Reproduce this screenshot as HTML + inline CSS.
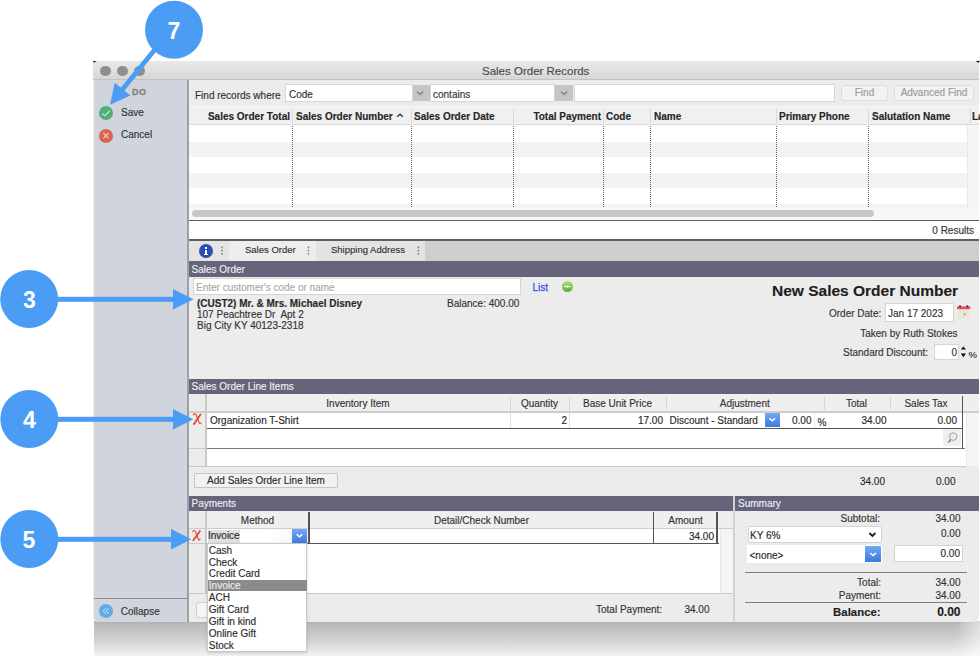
<!DOCTYPE html>
<html><head><meta charset="utf-8">
<style>
*{box-sizing:border-box;margin:0;padding:0}
html,body{width:980px;height:656px;overflow:hidden;background:#fff;font-family:"Liberation Sans",sans-serif;font-size:10px;color:#2b2b2b}
.a{position:absolute}
.t{position:absolute;white-space:pre;line-height:12px;-webkit-text-stroke:0.15px currentColor}
.r{text-align:right}
.c{text-align:center}
.hdr{position:absolute;background:#65647a;color:#eeeef2;font-size:10px;line-height:15px;padding-left:3px;-webkit-text-stroke:0.15px currentColor}
.inp{position:absolute;background:#fff;border:1px solid #cfcfcf}
.b{font-weight:bold}
.dot{position:absolute;width:1px;border-left:1px dotted #666}
</style></head><body>
<!-- shadow -->
<div class="a" style="left:94px;top:621px;width:886px;height:35px;background:linear-gradient(#adadad 0%,#bdbdbd 12%,#c6c6c6 35%,#dadada 65%,#f2f2f2 100%)"></div>
<div class="a" style="left:955px;top:621px;width:25px;height:35px;background:linear-gradient(90deg,rgba(255,255,255,0),rgba(255,255,255,.55))"></div>
<!-- window bg -->
<div class="a" style="left:93px;top:61px;width:886px;height:561px;background:#ececec;border-radius:1px 1px 5px 5px"></div>
<!-- title bar -->
<div class="a" style="left:93px;top:61px;width:886px;height:19px;background:linear-gradient(#e9e9e9,#d7d7d7);border-bottom:1px solid #c2c2c2;border-radius:1px 1px 0 0"></div>
<div class="a" style="left:100px;top:65.5px;width:10.5px;height:10.5px;border-radius:50%;background:#8f8e93"></div>
<div class="a" style="left:117px;top:65.5px;width:10.5px;height:10.5px;border-radius:50%;background:#8f8e93"></div>
<div class="a" style="left:134px;top:65.5px;width:10.5px;height:10.5px;border-radius:50%;background:#8f8e93"></div>
<div class="t" style="left:482px;top:64px;font-size:11.5px;line-height:14px;color:#4a4a4a">Sales Order Records</div>

<!-- sidebar -->
<div class="a" style="left:93.5px;top:80px;width:95px;height:541.5px;background:#d0d4dc;border-right:2px solid #9ea0a6;border-radius:0 0 0 5px"></div>
<div class="t b" style="left:131.9px;top:85.6px;font-size:9px;letter-spacing:0.7px;-webkit-text-stroke:0.3px #848484;color:#848484">DO</div>
<div class="a" style="left:99px;top:106px;width:14px;height:14px;border-radius:50%;background:#52ad7d"></div>
<div class="t" style="left:121px;top:107px;color:#333">Save</div>
<div class="a" style="left:99px;top:129px;width:14px;height:14px;border-radius:50%;background:#d9634f"></div>
<div class="t" style="left:121px;top:129px;color:#333">Cancel</div>
<div class="a" style="left:94px;top:598px;width:93px;height:1px;background:#8d8e92"></div>
<div class="a" style="left:99.1px;top:604px;width:14px;height:14px;border-radius:50%;background:#62abe3"></div>
<div class="t" style="left:120.8px;top:606px;color:#333">Collapse</div>

<!-- find bar -->
<div class="a" style="left:189px;top:80px;width:790px;height:26.8px;background:#ececec;border-bottom:1px solid #d5d5d5"></div>
<div class="t" style="left:195px;top:89.5px;color:#333">Find records where</div>
<div class="inp" style="left:285px;top:84px;width:128px;height:18px;border-color:#d6d6d6"></div>
<div class="t" style="left:289px;top:89px;color:#333">Code</div>
<div class="a" style="left:413.3px;top:84.6px;width:16.9px;height:16.8px;background:#c5c5c5"></div>
<div class="inp" style="left:430px;top:84px;width:125px;height:18px;border-color:#d6d6d6"></div>
<div class="t" style="left:433px;top:89px;color:#333">contains</div>
<div class="a" style="left:555.1px;top:84.6px;width:18.4px;height:16.8px;background:#c5c5c5"></div>
<div class="inp" style="left:574px;top:84px;width:261px;height:18px;border-color:#d6d6d6"></div>
<div class="a" style="left:841px;top:85px;width:47px;height:16px;background:#f2f2f2;border:1px solid #dedede;border-radius:3px"></div>
<div class="t c" style="left:841px;top:87px;width:47px;color:#9a9a9a">Find</div>
<div class="a" style="left:894px;top:85px;width:80px;height:16px;background:#f2f2f2;border:1px solid #dedede;border-radius:3px"></div>
<div class="t c" style="left:894px;top:87px;width:80px;color:#9a9a9a">Advanced Find</div>

<!-- grid -->
<div class="a" style="left:188.5px;top:106px;width:790.5px;height:114px;background:#f8f8f8"></div>
<div class="a" style="left:188.5px;top:106.8px;width:790.5px;height:18.7px;background:#f0f0f0;border-bottom:1px solid #d9d9d9"></div>
<div class="a" style="left:188.5px;top:125.5px;width:778px;height:16.5px;background:#fff"></div>
<div class="a" style="left:188.5px;top:142px;width:778px;height:15px;background:#f2f4f3"></div>
<div class="a" style="left:188.5px;top:157px;width:778px;height:15.5px;background:#fff"></div>
<div class="a" style="left:188.5px;top:172.5px;width:778px;height:15.5px;background:#f2f4f3"></div>
<div class="a" style="left:188.5px;top:188px;width:778px;height:15.5px;background:#fff"></div>
<div class="a" style="left:188.5px;top:203.5px;width:778px;height:4.0px;background:#f2f4f3"></div>
<div class="a" style="left:292px;top:109px;width:1px;height:14px;background:#dadada"></div>
<div class="a" style="left:411px;top:109px;width:1px;height:14px;background:#dadada"></div>
<div class="a" style="left:513px;top:109px;width:1px;height:14px;background:#dadada"></div>
<div class="a" style="left:603px;top:109px;width:1px;height:14px;background:#dadada"></div>
<div class="a" style="left:650px;top:109px;width:1px;height:14px;background:#dadada"></div>
<div class="a" style="left:776px;top:109px;width:1px;height:14px;background:#dadada"></div>
<div class="a" style="left:868px;top:109px;width:1px;height:14px;background:#dadada"></div>
<div class="a" style="left:970px;top:109px;width:1px;height:14px;background:#dadada"></div>
<div class="dot" style="left:292px;top:126px;height:80.5px"></div>
<div class="dot" style="left:411px;top:126px;height:80.5px"></div>
<div class="dot" style="left:513px;top:126px;height:80.5px"></div>
<div class="dot" style="left:603px;top:126px;height:80.5px"></div>
<div class="dot" style="left:650px;top:126px;height:80.5px"></div>
<div class="dot" style="left:776px;top:126px;height:80.5px"></div>
<div class="dot" style="left:868px;top:126px;height:80.5px"></div>
<div class="a" style="left:966.5px;top:125.5px;width:12.5px;height:82px;background:#f5f5f5;border-left:1px solid #e9e9e9"></div>
<div class="a" style="left:191.5px;top:210px;width:682px;height:6.5px;background:#c8c8c8;border-radius:3.5px"></div>
<div class="a" style="left:188.5px;top:219.5px;width:790.5px;height:1.5px;background:#5f5f5f"></div>
<div class="a" style="left:188.5px;top:221px;width:790.5px;height:18px;background:#fff"></div>
<div class="t r" style="left:874px;top:225px;width:100px;color:#333">0 Results</div>
<div class="a" style="left:188.5px;top:239px;width:790.5px;height:1.5px;background:#5f5f5f"></div>
<div class="t b r" style="left:190px;top:111.1px;width:100px;color:#262626">Sales Order Total</div>
<div class="t b" style="left:296px;top:111.1px;color:#262626">Sales Order Number</div>
<div class="t b" style="left:414px;top:111.1px;color:#262626">Sales Order Date</div>
<div class="t b r" style="left:501px;top:111.1px;width:100px;color:#262626">Total Payment</div>
<div class="t b" style="left:606px;top:111.1px;color:#262626">Code</div>
<div class="t b" style="left:654px;top:111.1px;color:#262626">Name</div>
<div class="t b" style="left:779px;top:111.1px;color:#262626">Primary Phone</div>
<div class="t b" style="left:872px;top:111.1px;color:#262626">Salutation Name</div>
<div class="t b" style="left:972px;top:111.1px;color:#262626">La</div>
<!-- tab bar -->
<div class="a" style="left:188.5px;top:240.5px;width:790.5px;height:20.5px;background:#cecece"></div>
<div class="a" style="left:188.5px;top:240.5px;width:40px;height:20.5px;background:#e4e4e4"></div>
<div class="a" style="left:228.5px;top:240.5px;width:87px;height:20.5px;background:#ededed"></div>
<div class="a" style="left:315.5px;top:240.5px;width:109.5px;height:20.5px;background:#e3e3e3"></div>
<div class="a" style="left:199px;top:244px;width:14px;height:14px;border-radius:50%;background:#2a4fb4"></div>
<div class="a" style="left:205px;top:247px;width:2.2px;height:2px;background:#fff"></div>
<div class="a" style="left:205px;top:250px;width:2.2px;height:4.5px;background:#fff"></div>
<div class="a" style="left:204px;top:254px;width:4.2px;height:1.2px;background:#fff"></div>
<div class="t" style="left:245px;top:243.5px;font-size:9.5px;color:#333">Sales Order</div>
<div class="t" style="left:331px;top:243.5px;font-size:9.5px;color:#333">Shipping Address</div>
<!-- section header sales order -->
<div class="hdr" style="left:188.5px;top:261px;width:790.5px;height:16px;line-height:17px">Sales Order</div>
<div class="inp" style="left:193px;top:278px;width:328px;height:16.5px;border-color:#d4d4d4"></div>
<div class="t" style="left:196px;top:281.5px;color:#a9a9a9">Enter customer's code or name</div>
<div class="t" style="left:532.5px;top:281.8px;color:#3550e6;-webkit-text-stroke:0.25px #3550e6">List</div>
<div class="a" style="left:562px;top:281.2px;width:10.8px;height:10.8px;border-radius:50%;background:linear-gradient(#ace275,#78bf50 60%,#5ea83c)"></div>

<div class="t b" style="left:197px;top:297.7px;color:#2a2a2a">(CUST2) Mr. &amp; Mrs. Michael Disney</div>
<div class="t" style="left:197px;top:308.8px;color:#333">107 Peachtree Dr  Apt 2</div>
<div class="t" style="left:197px;top:319.5px;color:#333">Big City KY 40123-2318</div>
<div class="t" style="left:447px;top:297.7px;color:#333">Balance: 400.00</div>
<div class="t b" style="left:772px;top:282px;font-size:15.5px;line-height:18px;color:#1e1e1e">New Sales Order Number</div>
<div class="t" style="left:829px;top:308px;color:#333">Order Date:</div>
<div class="inp" style="left:884.5px;top:303px;width:69.5px;height:19px;border-color:#d4d4d4"></div>
<div class="t" style="left:888px;top:307.5px;color:#333">Jan 17 2023</div>
<div class="t r" style="left:757.5px;top:327.5px;width:200px;color:#333">Taken by Ruth Stokes</div>
<div class="t" style="left:843px;top:347px;color:#333">Standard Discount:</div>
<div class="inp" style="left:934px;top:344px;width:25px;height:15.5px;border-color:#d4d4d4"></div>
<div class="t r" style="left:934px;top:347px;width:23px;color:#333">0</div>
<div class="t" style="left:968.6px;top:349px;font-size:9.6px;color:#333">%</div>

<!-- line items -->
<div class="hdr" style="left:188.5px;top:379px;width:790.5px;height:15px;line-height:15px">Sales Order Line Items</div>
<div class="a" style="left:188.5px;top:394px;width:790.5px;height:17px;background:#efefef"></div>
<div class="a" style="left:188.5px;top:394px;width:17px;height:72px;background:#ececec"></div>
<div class="a" style="left:205px;top:394px;width:1.5px;height:72px;background:#c9c9c9"></div>
<div class="a" style="left:188.5px;top:411px;width:790.5px;height:1.5px;background:#cdcdcd"></div>
<div class="a" style="left:206.5px;top:412.5px;width:759px;height:53.5px;background:#fff"></div>
<div class="a" style="left:965.5px;top:412.5px;width:13px;height:53.5px;background:#f5f5f5;border-left:1px solid #e8e8e8"></div>
<div class="a" style="left:188.5px;top:447.5px;width:17px;height:1px;background:#c9c9c9"></div>
<div class="a" style="left:206.5px;top:427.8px;width:756px;height:1.4px;background:#555"></div>
<div class="a" style="left:206.5px;top:447.8px;width:758px;height:1.3px;background:#7c7c7c"></div>
<div class="a" style="left:188.5px;top:465.5px;width:777px;height:1px;background:#c9c9c9"></div>
<div class="a" style="left:961.7px;top:396px;width:1.5px;height:53px;background:#555"></div>
<!-- header separators -->
<div class="a" style="left:510px;top:397px;width:1px;height:13px;background:#d6d6d6"></div>
<div class="a" style="left:569px;top:397px;width:1px;height:13px;background:#d6d6d6"></div>
<div class="a" style="left:666px;top:397px;width:1px;height:13px;background:#d6d6d6"></div>
<div class="a" style="left:823.5px;top:397px;width:1px;height:13px;background:#d6d6d6"></div>
<div class="a" style="left:889.5px;top:397px;width:1px;height:13px;background:#d6d6d6"></div>
<!-- row1 cell separators -->
<div class="a" style="left:510px;top:412.5px;width:1px;height:15px;background:#e0e0e0"></div>
<div class="a" style="left:569px;top:412.5px;width:1px;height:15px;background:#e0e0e0"></div>
<div class="a" style="left:814px;top:412.5px;width:1px;height:15px;background:#e6e6e6"></div>
<!-- header text -->
<div class="t c" style="left:206px;top:398px;width:304px;color:#333">Inventory Item</div>
<div class="t c" style="left:510px;top:398px;width:59px;color:#333">Quantity</div>
<div class="t c" style="left:569px;top:398px;width:97px;color:#333">Base Unit Price</div>
<div class="t c" style="left:666px;top:398px;width:157.5px;color:#333">Adjustment</div>
<div class="t c" style="left:823.5px;top:398px;width:66px;color:#333">Total</div>
<div class="t c" style="left:889.5px;top:398px;width:73px;color:#333">Sales Tax</div>
<!-- row 1 -->
<div class="t" style="left:210px;top:415px;color:#2a2a2a">Organization T-Shirt</div>
<div class="t r" style="left:467px;top:415px;width:100px;color:#2a2a2a">2</div>
<div class="t r" style="left:563px;top:415px;width:100px;color:#2a2a2a">17.00</div>
<div class="t" style="left:669.5px;top:415px;color:#2a2a2a">Discount - Standard</div>
<div class="a" style="left:764.5px;top:412.5px;width:15.5px;height:14.5px;background:linear-gradient(#74a8f3,#3b7ae0)"></div>
<div class="t r" style="left:711.5px;top:415px;width:100px;color:#2a2a2a">0.00</div>
<div class="t" style="left:817.5px;top:417px;color:#2a2a2a">%</div>
<div class="t r" style="left:786.5px;top:415px;width:100px;color:#2a2a2a">34.00</div>
<div class="t r" style="left:857px;top:415px;width:100px;color:#2a2a2a">0.00</div>
<!-- search btn -->
<div class="a" style="left:942.9px;top:429.4px;width:17.8px;height:16.3px;background:#efefef"></div>
<!-- totals -->
<div class="t r" style="left:785px;top:476px;width:100px;color:#2a2a2a">34.00</div>
<div class="t r" style="left:855.5px;top:476px;width:100px;color:#2a2a2a">0.00</div>
<div class="a" style="left:193.7px;top:472.5px;width:144.5px;height:15px;background:#f2f2f2;border:1px solid #c6c6c6;border-radius:1px"></div>
<div class="t c" style="left:194px;top:474.5px;width:144px;color:#2a2a2a">Add Sales Order Line Item</div>

<!-- payments -->
<div class="hdr" style="left:188.5px;top:495.5px;width:545px;height:15.5px;line-height:16.3px">Payments</div>
<div class="a" style="left:188.5px;top:511px;width:545px;height:16.5px;background:#efefef"></div>
<div class="a" style="left:188.5px;top:511px;width:17px;height:82px;background:#ececec"></div>
<div class="a" style="left:205px;top:511px;width:1.5px;height:82px;background:#c9c9c9"></div>
<div class="a" style="left:188.5px;top:527.5px;width:545px;height:1.2px;background:#cdcdcd"></div>
<div class="a" style="left:206.5px;top:528.7px;width:513.5px;height:64.3px;background:#fff"></div>
<div class="a" style="left:720px;top:528.7px;width:13px;height:64.3px;background:#f5f5f5;border-left:1px solid #e8e8e8"></div>
<div class="a" style="left:188.5px;top:592.5px;width:545px;height:1px;background:#c9c9c9"></div>
<div class="a" style="left:188.5px;top:543px;width:17px;height:1px;background:#c9c9c9"></div>
<div class="a" style="left:206.5px;top:542.6px;width:512px;height:1.4px;background:#555"></div>
<div class="a" style="left:308.3px;top:512px;width:1.6px;height:32px;background:#555"></div>
<div class="a" style="left:652.6px;top:512px;width:1.6px;height:32px;background:#555"></div>
<div class="a" style="left:716.4px;top:512px;width:1.6px;height:32px;background:#555"></div>
<div class="t c" style="left:206.5px;top:514.5px;width:102px;color:#333">Method</div>
<div class="t c" style="left:310px;top:514.5px;width:343px;color:#333">Detail/Check Number</div>
<div class="t c" style="left:654px;top:514.5px;width:63px;color:#333">Amount</div>
<div class="a" style="left:206.5px;top:528.7px;width:101.8px;height:13.9px;background:linear-gradient(90deg,#fff 60%,#f4f4f4)"></div>
<div class="a" style="left:207.5px;top:529.5px;width:32px;height:13px;background:#e0e0e0"></div>
<div class="t" style="left:208px;top:530px;color:#2a2a2a">Invoice</div>
<div class="a" style="left:291.7px;top:529px;width:15.7px;height:13.5px;background:linear-gradient(#74a8f3,#3b7ae0)"></div>
<div class="t r" style="left:614px;top:531px;width:100px;color:#2a2a2a">34.00</div>
<div class="t" style="left:596px;top:603.5px;color:#333">Total Payment:</div>
<div class="t r" style="left:609.5px;top:603.5px;width:100px;color:#333">34.00</div>
<div class="a" style="left:196px;top:602px;width:12px;height:15.5px;background:#f6f6f6;border:1px solid #d0d0d0;border-right:none;border-radius:3px 0 0 3px"></div>
<!-- summary -->
<div class="a" style="left:733.3px;top:495.5px;width:1.7px;height:126px;background:#d2d2d2"></div>
<div class="hdr" style="left:735px;top:495.5px;width:244px;height:15.5px;line-height:16px">Summary</div>
<div class="t r" style="left:780px;top:512.8px;width:100px;color:#333">Subtotal:</div>
<div class="t r" style="left:860.5px;top:512.8px;width:100px;color:#333">34.00</div>
<div class="a" style="left:748px;top:526px;width:133.7px;height:17.4px;background:#fff;border:1px solid #d3d3d3;border-radius:2px"></div>
<div class="t" style="left:750px;top:530px;color:#2a2a2a">KY 6%</div>
<div class="t r" style="left:860.5px;top:527.5px;width:100px;color:#333">0.00</div>
<div class="a" style="left:747.4px;top:545.2px;width:134.3px;height:17.6px;background:#fff"></div>
<div class="t" style="left:749.5px;top:549.8px;color:#2a2a2a">&lt;none&gt;</div>
<div class="a" style="left:865.3px;top:546.3px;width:16px;height:15.7px;background:linear-gradient(#74a8f3,#3b7ae0)"></div>
<div class="inp" style="left:893.6px;top:545.4px;width:69.4px;height:16.2px;border-color:#d4d4d4"></div>
<div class="t r" style="left:860px;top:548px;width:100px;color:#2a2a2a">0.00</div>
<div class="a" style="left:745px;top:572.3px;width:222px;height:1.2px;background:#7d7d7d"></div>
<div class="t r" style="left:781px;top:576.5px;width:100px;color:#333">Total:</div>
<div class="t r" style="left:860.5px;top:576.5px;width:100px;color:#333">34.00</div>
<div class="t r" style="left:781px;top:590px;width:100px;color:#333">Payment:</div>
<div class="t r" style="left:860.5px;top:590px;width:100px;color:#333">34.00</div>
<div class="a" style="left:745px;top:601.8px;width:222px;height:1.2px;background:#7d7d7d"></div>
<div class="t b r" style="left:780.6px;top:604.8px;width:100px;font-size:11.4px;line-height:14px;color:#1e1e1e">Balance:</div>
<div class="t b r" style="left:860.5px;top:604.5px;width:100px;font-size:12px;line-height:14px;color:#1e1e1e">0.00</div>
<!-- dropdown list -->
<div class="a" style="left:206.7px;top:543.2px;width:100.5px;height:108.5px;background:#fff;border:1px solid #c8c8c8;box-shadow:0 1px 3px rgba(0,0,0,.15)"></div>
<div class="a" style="left:207.5px;top:579.8px;width:99px;height:11.5px;background:#8b8b8b"></div>
<div class="t" style="left:208.8px;top:544.6px;color:#2a2a2a">Cash</div>
<div class="t" style="left:208.8px;top:556.5px;color:#2a2a2a">Check</div>
<div class="t" style="left:208.8px;top:568.4px;color:#2a2a2a">Credit Card</div>
<div class="t" style="left:208.8px;top:580.3px;color:#ececec">Invoice</div>
<div class="t" style="left:208.8px;top:592.2px;color:#2a2a2a">ACH</div>
<div class="t" style="left:208.8px;top:604.1px;color:#2a2a2a">Gift Card</div>
<div class="t" style="left:208.8px;top:616.0px;color:#2a2a2a">Gift in kind</div>
<div class="t" style="left:208.8px;top:627.9px;color:#2a2a2a">Online Gift</div>
<div class="t" style="left:208.8px;top:639.8px;color:#2a2a2a">Stock</div>

<!-- icons -->
<svg class="a" style="left:0;top:0" width="980" height="656" viewBox="0 0 980 656" fill="none">
<!-- save check -->
<path d="M102.2,113.3 L105,115.8 L109.8,110.7" stroke="#d2eadb" stroke-width="1.1"/>
<!-- cancel x -->
<path d="M103.4,133 L108.6,138.4 M108.6,133 L103.4,138.4" stroke="#f2d2ca" stroke-width="1.1"/>
<!-- collapse << -->
<path d="M105.6,608.2 L103.2,611.1 L105.7,613.9 M108.6,608.2 L106.1,611.1 L108.7,614" stroke="#c2e0f6" stroke-width="1"/>
<!-- find bar chevrons -->
<path d="M417.2,91.8 L420.2,94.4 L423.2,91.8" stroke="#7a7a7a" stroke-width="1.2"/>
<path d="M561.2,91.8 L564.2,94.4 L567.2,91.8" stroke="#7a7a7a" stroke-width="1.2"/>
<!-- sort caret -->
<path d="M397.2,116.8 L400,114.2 L402.8,116.8" stroke="#3a3a3a" stroke-width="1.5"/>
<!-- tab dots -->
<g fill="#7a7a7a">
<rect x="221.3" y="246.6" width="1.5" height="1.6"/><rect x="221.3" y="249.8" width="1.5" height="1.6"/><rect x="221.3" y="253" width="1.5" height="1.6"/>
<rect x="307.7" y="246.6" width="1.5" height="1.6"/><rect x="307.7" y="249.8" width="1.5" height="1.6"/><rect x="307.7" y="253" width="1.5" height="1.6"/>
<rect x="417.6" y="246.6" width="1.5" height="1.6"/><rect x="417.6" y="249.8" width="1.5" height="1.6"/><rect x="417.6" y="253" width="1.5" height="1.6"/>
</g>
<!-- calendar -->
<rect x="957" y="309.2" width="13.3" height="9.8" fill="#eee9d8"/>
<path d="M957,312.3 H970.3 M957,315.4 H970.3 M960.3,309.2 V319 M963.6,309.2 V319 M967,309.2 V319" stroke="#e0dac4" stroke-width="0.5"/>
<rect x="957" y="306.4" width="13.3" height="2.8" fill="#e8525e"/>
<circle cx="960" cy="306.4" r="1.1" fill="#334"/>
<circle cx="967.3" cy="306.4" r="1.1" fill="#334"/>
<circle cx="964.6" cy="314.3" r="0.9" fill="#3bb07a"/>
<!-- spinner -->
<path d="M960.8,349.6 L963.4,346.4 L966,349.6 Z M960.8,353.5 L963.4,357.2 L966,353.5 Z" fill="#111"/>
<!-- List green icon -->
<path d="M563.8,286.6 H570.8" stroke="#fff" stroke-width="1"/><path d="M566,286.6 L567.3,285.3 L568.6,286.6 L567.3,287.9 Z" fill="#fff"/>
<!-- blue button chevrons -->
<path d="M769.4,418.2 L772.3,420.8 L775.2,418.2" stroke="#fff" stroke-width="1.5"/>
<path d="M296.6,534.2 L299.5,536.8 L302.4,534.2" stroke="#fff" stroke-width="1.5"/>
<path d="M870.2,553 L873.1,555.6 L876,553" stroke="#fff" stroke-width="1.5"/>
<!-- KY chevron -->
<path d="M869.4,533 L872.4,535.9 L875.4,533" stroke="#1e1e1e" stroke-width="1.8"/>
<!-- magnifier -->
<circle cx="953.2" cy="436.6" r="3.8" fill="#e2ebf6" stroke="#9a9a9a" stroke-width="0.9"/>
<path d="M950.6,439.6 L948.4,442.6" stroke="#707070" stroke-width="1.3"/>
<!-- red chi row1 -->
<path d="M193.2,415.4 C193.8,413.6 195.4,413.2 196.2,415 L199.2,422.8 C199.6,424 200.6,423.6 201.2,422.4" stroke="#e8472c" stroke-width="1.1"/>
<path d="M200.8,413.9 C198.6,417.2 196.2,421 193.6,424.6" stroke="#e8472c" stroke-width="1.8"/>
<!-- red chi payments -->
<path d="M192.5,532 C193.1,530.2 194.7,529.8 195.5,531.6 L198.3,539.2 C198.7,540.4 199.7,540 200.3,538.8" stroke="#e8472c" stroke-width="1.1"/>
<path d="M200.3,530.4 C198.1,533.7 195.7,537.2 192.8,540.8" stroke="#e8472c" stroke-width="1.8"/>
</svg>

<svg class="a" style="left:90px;top:58px" width="10" height="8"><polygon points="3.3,2.8 6.8,3.6 3.5,4.8" fill="#22221c"/></svg>
<svg class="a" style="left:970px;top:58px" width="10" height="8"><polygon points="5.5,3.2 9.5,2.6 9,5" fill="#2a2a22"/></svg>
<!-- annotations -->
<svg class="a" style="left:0;top:0" width="980" height="656" viewBox="0 0 980 656">
<g fill="#4a9cf5">
<circle cx="174" cy="29.8" r="29"/>
<line x1="158.6" y1="45" x2="120.5" y2="91.8" stroke="#4a9cf5" stroke-width="4.8"/>
<polygon points="110,104.7 114.8,82.8 130.4,95.4"/>
<circle cx="29.2" cy="299" r="29"/>
<rect x="55" y="296.8" width="120" height="5"/>
<polygon points="193.6,299.2 173,288.9 173,309.5"/>
<circle cx="29.3" cy="419" r="29"/>
<rect x="55" y="416.8" width="120" height="5"/>
<polygon points="193.4,419.2 173,408.9 173,429.5"/>
<circle cx="29.3" cy="539" r="29"/>
<rect x="55" y="536.8" width="118" height="5"/>
<polygon points="191.3,539.2 171,528.9 171,549.5"/>
</g>
<g fill="#fff" font-family="Liberation Sans" font-weight="bold" font-size="23" text-anchor="middle">
<text x="174" y="39">7</text>
<text x="29.5" y="307.5">3</text>
<text x="29.5" y="428">4</text>
<text x="28.8" y="548">5</text>
</g>
</svg>

</body></html>
